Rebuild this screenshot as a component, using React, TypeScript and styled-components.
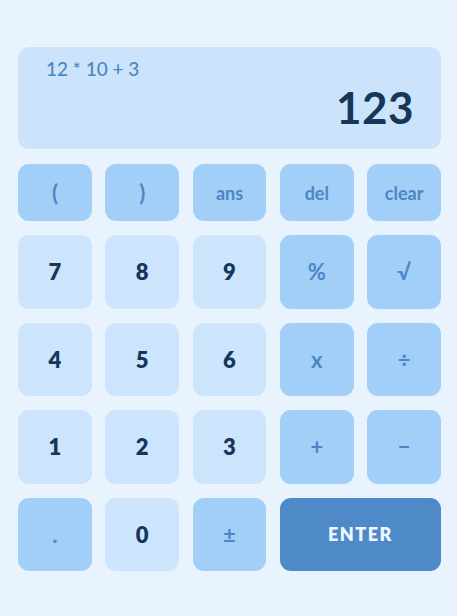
import styled, { createGlobalStyle } from "styled-components";

const GlobalStyle = createGlobalStyle`
  html, body {
    margin: 0;
    padding: 0;
    background: #e8f3fe;
  }
  * {
    box-sizing: border-box;
  }
`;

const Maincontainer = styled.main`
  width: 457px;
  height: 616px;
  padding: 47px 16px 0 18px;
  background: #e8f3fe;
  font-family: Lato, "Open Sans", sans-serif;
`;

const Screen = styled.section`
  height: 102px;
  border-radius: 11px;
  background: #cbe4fc;
  padding: 10px 27px 0 28px;
  display: flex;
  flex-direction: column;
`;

const Expression = styled.div`
  font-size: 19px;
  font-weight: 500;
  color: #4a87c4;
  line-height: 24px;
`;

const Result = styled.div`
  font-size: 44px;
  font-weight: 700;
  color: #16375a;
  text-align: right;
  line-height: 50px;
  margin-top: 1px;
  letter-spacing: 0.5px;
`;

const Keypad = styled.div`
  margin-top: 15px;
  display: grid;
  grid-template-columns: repeat(5, 1fr);
  grid-template-rows: 57px repeat(4, 73.5px);
  column-gap: 13.5px;
  row-gap: 14px;
`;

const Key = styled.button<{ $kind: "num" | "op" | "enter"; $wide?: boolean }>`
  border: none;
  border-radius: 11px;
  font-family: inherit;
  display: flex;
  align-items: center;
  justify-content: center;
  padding: 0;
  grid-column: ${(p) => (p.$wide ? "span 2" : "auto")};
  background: ${(p) =>
    p.$kind === "num" ? "#cce5fd" : p.$kind === "op" ? "#a2cff8" : "#4d8ac7"};
  color: ${(p) =>
    p.$kind === "num" ? "#16375a" : p.$kind === "op" ? "#4a87c4" : "#eef6ff"};
  font-size: ${(p) => (p.$kind === "enter" ? "18px" : "22px")};
  font-weight: ${(p) => (p.$kind === "op" ? 700 : 800)};
  letter-spacing: ${(p) => (p.$kind === "enter" ? "1.5px" : "0")};
`;

const Small = styled.span`
  font-size: 18px;
  font-weight: 700;
`;

type K = { label: string; kind: "num" | "op" | "enter"; small?: boolean; wide?: boolean };

const keys: K[] = [
  { label: "(", kind: "op" },
  { label: ")", kind: "op" },
  { label: "ans", kind: "op", small: true },
  { label: "del", kind: "op", small: true },
  { label: "clear", kind: "op", small: true },
  { label: "7", kind: "num" },
  { label: "8", kind: "num" },
  { label: "9", kind: "num" },
  { label: "%", kind: "op" },
  { label: "√", kind: "op" },
  { label: "4", kind: "num" },
  { label: "5", kind: "num" },
  { label: "6", kind: "num" },
  { label: "x", kind: "op" },
  { label: "÷", kind: "op" },
  { label: "1", kind: "num" },
  { label: "2", kind: "num" },
  { label: "3", kind: "num" },
  { label: "+", kind: "op" },
  { label: "−", kind: "op" },
  { label: ".", kind: "op" },
  { label: "0", kind: "num" },
  { label: "±", kind: "op" },
  { label: "ENTER", kind: "enter", wide: true },
];

export default function App() {
  return (
    <>
      <GlobalStyle />
      <Maincontainer>
        <Screen>
          <Expression>12 * 10 + 3</Expression>
          <Result>123</Result>
        </Screen>
        <Keypad>
          {keys.map((k) => (
            <Key key={k.label} $kind={k.kind} $wide={k.wide}>
              {k.small ? <Small>{k.label}</Small> : k.label}
            </Key>
          ))}
        </Keypad>
      </Maincontainer>
    </>
  );
}
